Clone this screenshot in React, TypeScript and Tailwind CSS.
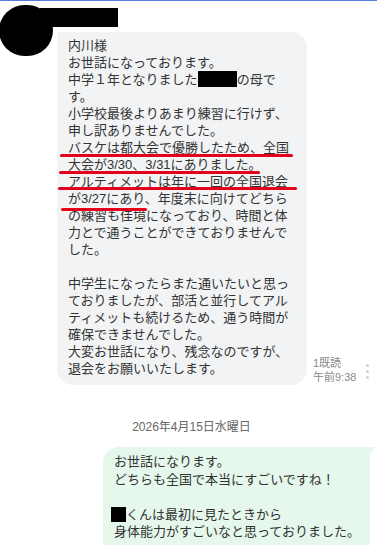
import React from "react";

const font = { fontFamily: '"Liberation Sans", "Noto Sans CJK JP", sans-serif' };

function Line({ children }: { children?: React.ReactNode }) {
  return <div className="whitespace-nowrap h-[17px]">{children}</div>;
}

function Line2({ children }: { children?: React.ReactNode }) {
  return <div className="whitespace-nowrap h-[17.5px]">{children}</div>;
}

export default function App() {
  return (
    <div
      className="w-[377px] h-[545px] bg-white overflow-hidden border-t border-[#5a78e6] text-[13px] leading-[17px] text-[#333333]"
      style={font}
    >
      {/* left message row */}
      <div className="flex items-start">
        <div className="w-[57px] shrink-0">
          <div className="w-[54px] h-[51px] rounded-full bg-black -ml-[1px] mt-[4px]" />
        </div>
        <div className="flex flex-col">
          <div className="w-[78px] h-[19px] bg-black -ml-[17px] mt-[7px]" />
          <div className="flex items-end mt-[5px]">
            <div className="relative w-[250px] bg-[#f2f3f5] rounded-[16px] rounded-tl-[3px] pl-[11px] pt-[5px] pb-[8px]">
              <Line>内川様</Line>
              <Line>お世話になっております。</Line>
              <Line>
                中学１年となりました
                <span className="inline-block w-[39px] h-[16px] bg-black align-[-3px]" />
                の母で
              </Line>
              <Line>す。</Line>
              <Line>小学校最後よりあまり練習に行けず、</Line>
              <Line>申し訳ありませんでした。</Line>
              <Line>バスケは都大会で優勝したため、全国</Line>
              <Line>大会が3/30、3/31にありました。</Line>
              <Line>アルティメットは年に一回の全国退会</Line>
              <Line>が3/27にあり、年度末に向けてどちら</Line>
              <Line>の練習も佳境になっており、時間と体</Line>
              <Line>力とで通うことができておりませんで</Line>
              <Line>した。</Line>
              <Line></Line>
              <Line>中学生になったらまた通いたいと思っ</Line>
              <Line>ておりましたが、部活と並行してアル</Line>
              <Line>ティメットも続けるため、通う時間が</Line>
              <Line>確保できませんでした。</Line>
              <Line>大変お世話になり、残念なのですが、</Line>
              <Line>退会をお願いいたします。</Line>

              {/* red hand-drawn underlines (annotation overlay) */}
              <div className="absolute left-[3px] top-[122px] w-[233px] h-[3px] rounded-full bg-[#e5001c]" />
              <div className="absolute left-[2px] top-[139px] w-[201px] h-[3px] rounded-full bg-[#e5001c]" />
              <div className="absolute left-[1px] top-[155px] w-[239px] h-[3px] rounded-full bg-[#e5001c]" />
              <div className="absolute left-[4px] top-[176px] w-[86px] h-[3px] rounded-full bg-[#e5001c]" />
            </div>
            <div className="ml-[6px] mb-[1px] flex flex-col text-[11px] leading-[14px] text-[#8a8a8a]">
              <span>1既読</span>
              <span>午前9:38</span>
            </div>
            <div className="ml-[10px] mb-[6px] flex flex-col gap-[3px]">
              <span className="w-[3px] h-[3px] rounded-full bg-[#cfcfcf]" />
              <span className="w-[3px] h-[3px] rounded-full bg-[#cfcfcf]" />
              <span className="w-[3px] h-[3px] rounded-full bg-[#cfcfcf]" />
            </div>
          </div>
        </div>
      </div>

      {/* date */}
      <div className="flex justify-center pl-[6px] mt-[34px] text-[12px] leading-[16px] text-[#666666]">
        2026年4月15日水曜日
      </div>

      {/* right message */}
      <div className="flex justify-end pr-[7px] mt-[12px]">
        <div className="relative w-[267px] bg-[#e6f7ec] rounded-l-[16px] rounded-br-[16px] pl-[11px] pt-[6px] pb-[20px] leading-[17.5px]">
          <Line2>お世話になります。</Line2>
          <Line2>どちらも全国で本当にすごいですね！</Line2>
          <Line2></Line2>
          <Line2>
            <span className="inline-block w-[15px] h-[15px] bg-black -ml-[3px] align-[-3px]" />
            くんは最初に見たときから
          </Line2>
          <Line2>身体能力がすごいなと思っておりました。</Line2>
          <div className="absolute -right-[5px] top-0 w-0 h-0 border-t-[8px] border-t-[#e6f7ec] border-r-[5px] border-r-transparent" />
        </div>
      </div>
    </div>
  );
}
